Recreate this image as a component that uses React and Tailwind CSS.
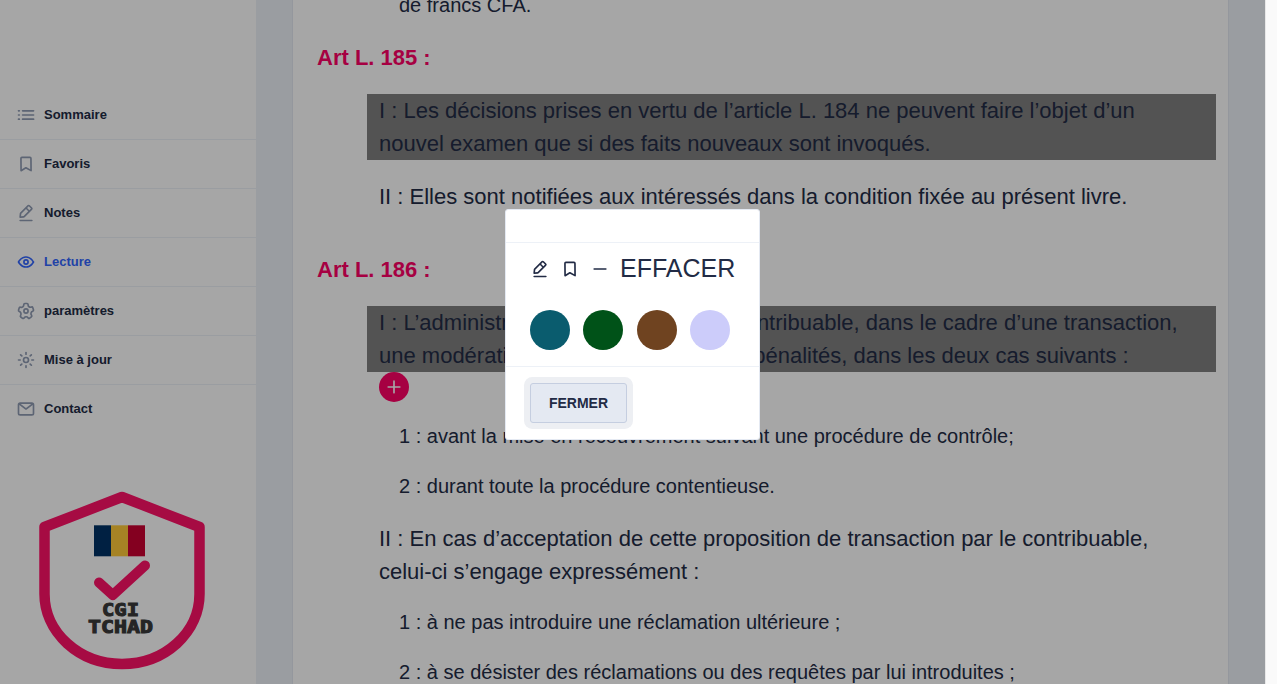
const ICONS = {
  edit: [
    'M19 20H5a1 1 0 0 0 0 2h14a1 1 0 0 0 0-2z',
    'M5 18h.09l4.17-.38a2 2 0 0 0 1.21-.57l9-9a1.92 1.92 0 0 0-.07-2.71L16.66 2.6A2 2 0 0 0 14 2.53l-9 9a2 2 0 0 0-.57 1.21L4 16.91A1 1 0 0 0 5 18zM15.27 4L18 6.73l-2 1.95L13.32 6zm-8.9 8.91L12 7.32l2.7 2.7-5.6 5.6-3 .28z',
  ],
  bookmark: [
    'M6.09 21.06a1 1 0 0 1-1-1L4.94 5.4a2.26 2.26 0 0 1 2.18-2.35L16.71 3a2.27 2.27 0 0 1 2.23 2.31l.14 14.66a1 1 0 0 1-.49.87 1 1 0 0 1-1 0l-5.7-3.16-5.29 3.23a1.2 1.2 0 0 1-.51.15zm5.76-5.55a1.11 1.11 0 0 1 .5.12l4.71 2.61-.12-12.95c0-.2-.13-.34-.21-.33l-9.6.09c-.08 0-.19.13-.19.33l.12 12.9 4.28-2.63a1.06 1.06 0 0 1 .51-.14z',
  ],
  eye: [
    'M21.87 11.5c-.64-1.11-4.16-6.68-10.14-6.5-5.53.14-8.73 5-9.6 6.5a1 1 0 0 0 0 1c.63 1.09 4 6.5 9.89 6.5h.25c5.53-.14 8.74-5 9.6-6.5a1 1 0 0 0 0-1zM12.22 17c-4.31.1-7.12-3.59-8-5 1-1.61 3.61-4.9 7.61-5 4.29-.11 7.11 3.59 8 5-1.03 1.61-3.61 4.9-7.61 5z',
    'M12 8.5a3.5 3.5 0 1 0 3.5 3.5A3.5 3.5 0 0 0 12 8.5zm0 5a1.5 1.5 0 1 1 1.5-1.5 1.5 1.5 0 0 1-1.5 1.5z',
  ],
  settings: [
    'M8.61 22a2.25 2.25 0 0 1-1.35-.46L5.19 20a2.37 2.37 0 0 1-.49-3.22 2.06 2.06 0 0 0 .23-1.86l-.06-.16a1.83 1.83 0 0 0-1.12-1.22h-.16a2.34 2.34 0 0 1-1.48-2.94L2.93 8a2.18 2.18 0 0 1 1.12-1.41 2.14 2.14 0 0 1 1.68-.12 1.93 1.93 0 0 0 1.78-.29l.13-.1a1.94 1.94 0 0 0 .73-1.51v-.24A2.32 2.32 0 0 1 10.66 2h2.55a2.26 2.26 0 0 1 1.6.67 2.37 2.37 0 0 1 .68 1.68v.28a1.76 1.76 0 0 0 .69 1.43l.11.08a1.74 1.74 0 0 0 1.59.26l.34-.11A2.26 2.26 0 0 1 21.1 7.8l.79 2.52a2.36 2.36 0 0 1-1.46 2.93l-.2.07A1.89 1.89 0 0 0 19 14.6a2 2 0 0 0 .25 1.65l.26.38a2.38 2.38 0 0 1-.5 3.23L17 21.41a2.24 2.24 0 0 1-3.22-.53l-.12-.17a1.75 1.75 0 0 0-1.5-.78 1.8 1.8 0 0 0-1.43.77l-.23.33A2.25 2.25 0 0 1 9 22a2 2 0 0 1-.39 0zM4.4 11.62a3.83 3.83 0 0 1 2.38 2.5v.12a4 4 0 0 1-.46 3.62.38.38 0 0 0 0 .51L8.47 20a.25.25 0 0 0 .37-.07l.23-.33a3.77 3.77 0 0 1 6.2 0l.12.18a.3.3 0 0 0 .18.12.25.25 0 0 0 .19-.05l2.06-1.56a.36.36 0 0 0 .07-.49l-.26-.38A4 4 0 0 1 17.1 14a3.92 3.92 0 0 1 2.49-2.61l.2-.07a.34.34 0 0 0 .19-.44l-.78-2.49a.35.35 0 0 0-.2-.19.21.21 0 0 0-.19 0l-.34.11a3.74 3.74 0 0 1-3.43-.57L15 7.65a3.76 3.76 0 0 1-1.49-3v-.31a.37.37 0 0 0-.1-.26.31.31 0 0 0-.21-.08h-2.54a.31.31 0 0 0-.29.33v.25a3.9 3.9 0 0 1-1.52 3.09l-.13.1a3.91 3.91 0 0 1-3.63.59.22.22 0 0 0-.14 0 .28.28 0 0 0-.12.15L4 11.12a.36.36 0 0 0 .22.45z',
    'M12 15.5a3.5 3.5 0 1 1 3.5-3.5 3.5 3.5 0 0 1-3.5 3.5zm0-5a1.5 1.5 0 1 0 1.5 1.5 1.5 1.5 0 0 0-1.5-1.5z',
  ],
  sun: [
    'M12 6a1 1 0 0 0 1-1V3a1 1 0 0 0-2 0v2a1 1 0 0 0 1 1z',
    'M21 11h-2a1 1 0 0 0 0 2h2a1 1 0 0 0 0-2z',
    'M6 12a1 1 0 0 0-1-1H3a1 1 0 0 0 0 2h2a1 1 0 0 0 1-1z',
    'M6.22 5a1 1 0 0 0-1.39 1.47l1.44 1.39a1 1 0 0 0 .73.28 1 1 0 0 0 .72-.31 1 1 0 0 0 0-1.41z',
    'M17 8.14a1 1 0 0 0 .69-.28l1.44-1.39A1 1 0 0 0 17.78 5l-1.44 1.42a1 1 0 0 0 0 1.41 1 1 0 0 0 .66.31z',
    'M12 18a1 1 0 0 0-1 1v2a1 1 0 0 0 2 0v-2a1 1 0 0 0-1-1z',
    'M17.73 16.14a1 1 0 0 0-1.39 1.44L17.78 19a1 1 0 0 0 .69.28 1 1 0 0 0 .72-.3 1 1 0 0 0 0-1.42z',
    'M6.27 16.14l-1.44 1.39a1 1 0 0 0 0 1.42 1 1 0 0 0 .72.3 1 1 0 0 0 .67-.25l1.44-1.39a1 1 0 0 0-1.39-1.44z',
    'M12 8a4 4 0 1 0 4 4 4 4 0 0 0-4-4zm0 6a2 2 0 1 1 2-2 2 2 0 0 1-2 2z',
  ],
  email: [
    'M19 4H5a3 3 0 0 0-3 3v10a3 3 0 0 0 3 3h14a3 3 0 0 0 3-3V7a3 3 0 0 0-3-3zm-.67 2L12 10.75 5.67 6zM19 18H5a1 1 0 0 1-1-1V7.25l7.4 5.55a1 1 0 0 0 .6.2 1 1 0 0 0 .6-.2L20 7.25V17a1 1 0 0 1-1 1z',
  ],
  list: [
    'M3 6h1a1 1 0 0 1 0 2H3a1 1 0 0 1 0-2zM3 11h1a1 1 0 0 1 0 2H3a1 1 0 0 1 0-2zM3 16h1a1 1 0 0 1 0 2H3a1 1 0 0 1 0-2z',
    'M7.9 6h13.2a1 1 0 0 1 0 2H7.9a1 1 0 0 1 0-2zM7.9 11h13.2a1 1 0 0 1 0 2H7.9a1 1 0 0 1 0-2zM7.9 16h13.2a1 1 0 0 1 0 2H7.9a1 1 0 0 1 0-2z',
  ],
  minus: ['M19 13H5a1 1 0 0 1 0-2h14a1 1 0 0 1 0 2z'],
  plus: ['M19 11h-6V5a1 1 0 0 0-2 0v6H5a1 1 0 0 0 0 2h6v6a1 1 0 0 0 2 0v-6h6a1 1 0 0 0 0-2z'],
};

function Icon({ name, className }) {
  return (
    <svg viewBox="0 0 24 24" fill="currentColor" className={className}>
      {ICONS[name].map((d) => (
        <path key={d} d={d} />
      ))}
    </svg>
  );
}

const MENU = [
  ['list', 'Sommaire'],
  ['bookmark', 'Favoris'],
  ['edit', 'Notes'],
  ['eye', 'Lecture'],
  ['settings', 'paramètres'],
  ['sun', 'Mise à jour'],
  ['email', 'Contact'],
];

function Logo() {
  return (
    <svg viewBox="0 0 170 180" className="ml-[37px] mt-[56px] h-[180px] w-[170px]">
      <path
        d="M85 7 L162.500 37 V104 A77.500 70 0 0 1 7.500 104 V37 Z"
        fill="none"
        stroke="#ff1168"
        strokeWidth="10.500"
        strokeLinejoin="round"
      />
      <rect x="57" y="35.300" width="17" height="31" fill="#003266" />
      <rect x="74" y="35.300" width="17" height="31" fill="#ffca3a" />
      <rect x="91" y="35.300" width="17" height="31" fill="#cb0032" />
      <path d="M62 92.500 L75.800 105 L108 75.500" fill="none" stroke="#ff1168" strokeWidth="10" strokeLinecap="round" strokeLinejoin="round" />
      <g className="font-['DejaVu_Sans_Mono',monospace] text-[17px] font-bold" fill="#393939" stroke="#393939" strokeWidth="1" strokeLinejoin="miter">
        <text x="65" y="126.300" textLength="37" lengthAdjust="spacingAndGlyphs">CGI</text>
        <text x="51" y="143.100" textLength="65" lengthAdjust="spacingAndGlyphs">TCHAD</text>
      </g>
    </svg>
  );
}

function Sidebar() {
  return (
    <aside className="h-full w-64 shrink-0 bg-white pt-[91px]">
      <ul>
        {MENU.map(([icon, label], i) => (
          <li
            key={label}
            className={
              'flex h-[49px] items-center gap-2 border-b px-4 text-[13px] font-bold ' +
              (i === MENU.length - 1 ? 'border-transparent ' : 'border-[#edf1f7] ') +
              (label === 'Lecture' ? 'text-[#3366ff]' : 'text-[#222b45]')
            }
          >
            <Icon name={icon} className={'size-5 ' + (label === 'Lecture' ? '' : 'text-[#8f9bb3]')} />
            <span>{label}</span>
          </li>
        ))}
      </ul>
      <Logo />
    </aside>
  );
}

function Title({ children }) {
  return <h2 className="h-[33px] pl-6 text-[22px] font-bold leading-[33px] text-[#ff0066]">{children}</h2>;
}

function Article() {
  return (
    <main className="h-full w-[937px] shrink-0 overflow-hidden whitespace-nowrap border-x border-[#e4e9f2] bg-white text-[22px] leading-[33px]">
      <p className="-mt-[10px] pl-[106px] text-[20px] leading-[30px]">de francs CFA.</p>
      <div className="mt-[21px]">
        <Title>Art L. 185 :</Title>
      </div>
      <p className="ml-[74px] mr-3 mt-5 bg-[#808080] pl-3">
        I : Les décisions prises en vertu de l’article L. 184 ne peuvent faire l’objet d’un
        <br />
        nouvel examen que si des faits nouveaux sont invoqués.
      </p>
      <p className="mt-5 pl-[86px]">II : Elles sont notifiées aux intéressés dans la condition fixée au présent livre.</p>
      <div className="mt-10">
        <Title>Art L. 186 :</Title>
      </div>
      <p className="ml-[74px] mr-3 mt-5 bg-[#808080] pl-3">
        I : L’administration peut accorder au contribuable, dans le cadre d’une transaction,
        <br />
        une modération d’impôts, droits ou de pénalités, dans les deux cas suivants :
      </p>
      <div className="ml-[86px] flex size-[30px] items-center justify-center rounded-full bg-[#ff0066] text-white">
        <Icon name="plus" className="size-5" />
      </div>
      <div className="mt-[19px] flex flex-col gap-5 pl-[106px] text-[20px] leading-[30px]">
        <p>1 : avant la mise en recouvrement suivant une procédure de contrôle;</p>
        <p>2 : durant toute la procédure contentieuse.</p>
      </div>
      <p className="mt-[21px] pl-[86px]">
        II : En cas d’acceptation de cette proposition de transaction par le contribuable,
        <br />
        celui-ci s’engage expressément :
      </p>
      <div className="mt-[19px] flex flex-col gap-5 pl-[106px] text-[20px] leading-[30px]">
        <p>1 : à ne pas introduire une réclamation ultérieure ;</p>
        <p>2 : à se désister des réclamations ou des requêtes par lui introduites ;</p>
      </div>
    </main>
  );
}

function Dialog() {
  return (
    <div className="absolute left-[505px] top-[209px] flex h-[231px] w-[255px] flex-col rounded-[3px] border border-[#e4e9f2] bg-white">
      <div className="h-[33px] shrink-0 border-b border-[#edf1f7]" />
      <div className="h-[124px] shrink-0 border-b border-[#edf1f7] px-6">
        <div className="flex h-[51px] items-center whitespace-nowrap text-[25px]">
          <Icon name="edit" className="mr-[10px] size-5 shrink-0" />
          <Icon name="bookmark" className="mr-[10px] size-5 shrink-0" />
          <Icon name="minus" className="mr-[10px] size-5 shrink-0" />
          <span>EFFACER</span>
        </div>
        <div className="mt-4 flex gap-[13.400px]">
          <span className="size-10 shrink-0 rounded-full bg-[#0a5c6e]" />
          <span className="size-10 shrink-0 rounded-full bg-[#005218]" />
          <span className="size-10 shrink-0 rounded-full bg-[#6f4320]" />
          <span className="size-10 shrink-0 rounded-full bg-[#ccccfa]" />
        </div>
      </div>
      <div className="px-6 pt-4">
        <button className="h-10 w-[97px] rounded-[3px] border border-[#c5cee0] bg-[#e4e9f2] text-[14px] font-bold shadow-[0_0_0_6px_#edeff3]">
          FERMER
        </button>
      </div>
    </div>
  );
}

export default function App() {
  return (
    <div className="relative flex h-[684px] w-[1277px] overflow-hidden bg-[#edf1f7] font-['Liberation_Sans',Arial,sans-serif] text-[#222b45]">
      <Sidebar />
      <div className="flex h-full w-[1009px] shrink-0 justify-center">
        <Article />
      </div>
      <div className="h-full w-3 shrink-0 border-l border-[#e8e8e8] bg-[#fafafa]" />
      <div className="absolute inset-y-0 left-0 w-[1265px] bg-black/35" />
      <Dialog />
    </div>
  );
}
